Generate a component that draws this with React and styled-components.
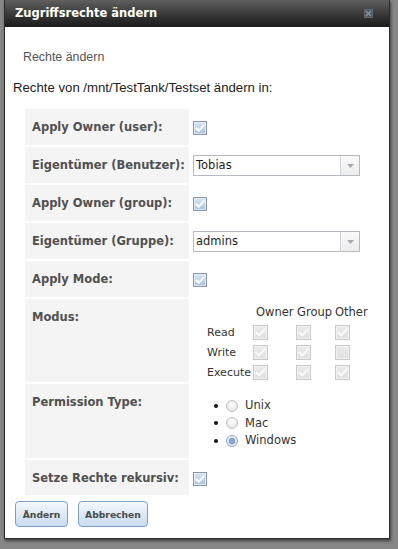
import React from 'react';
import styled, { createGlobalStyle } from 'styled-components';

const Global = createGlobalStyle`
  html, body { margin: 0; padding: 0; background: #878787; }
  body { font-family: "DejaVu Sans", sans-serif; }
  * { box-sizing: border-box; }
`;

const Screen = styled.div`
  width: 398px;
  height: 549px;
  overflow: hidden;
  background: #878787;
  padding-left: 4px;
`;

const Dialog = styled.div`
  width: 386px;
  border: 1px solid #2b2b2b;
  border-top: none;
  background: #fff;
  box-shadow: 1px 2px 3px rgba(0, 0, 0, 0.55);
`;

const TitleBar = styled.div`
  height: 27px;
  display: flex;
  align-items: center;
  justify-content: space-between;
  padding: 0 16px 1px 10px;
  background: linear-gradient(#5f5f5f, #303030 65%, #1b1b1b);
  color: #fff;
  font: bold 11.5px "DejaVu Sans", sans-serif;
`;

const Body = styled.div`
  padding: 22px 8px 11px;
`;

const Subtitle = styled.div`
  margin-left: 10px;
  font: 12.4px/16px "Liberation Sans", Arial, sans-serif;
  color: #555;
`;

const Intro = styled.div`
  margin-top: 15px;
  font: 13.2px/16px "Liberation Sans", Arial, sans-serif;
  color: #222;
`;

const Form = styled.div`
  margin: 13px 0 0 12px;
  display: flex;
  flex-direction: column;
  gap: 2px;
`;

const Row = styled.div`
  display: grid;
  grid-template-columns: 164px 1fr;
  column-gap: 4px;
  height: ${(p) => p.$h}px;
`;

const Label = styled.div`
  background: #f4f4f4;
  padding: 11px 7px 0;
  font: bold 11.5px/15px "DejaVu Sans", sans-serif;
  color: #505050;
  white-space: nowrap;
`;

const Value = styled.div`
  padding-top: ${(p) => p.$pt}px;
  padding-left: ${(p) => p.$pl || 0}px;
  font: 11.5px/15px "DejaVu Sans", sans-serif;
  color: #222;
`;

const SelectBox = styled.div`
  width: 167px;
  height: 21px;
  display: flex;
  border: 1px solid #b5bac1;
  background: #fff;
`;

const SelectText = styled.div`
  flex: 1;
  padding-left: 2px;
  font: 11.5px/19px "DejaVu Sans", sans-serif;
  color: #1e1e1e;
`;

const SelectArrow = styled.div`
  width: 19px;
  border-left: 1px solid #d3d6da;
  background: linear-gradient(#fafafa, #ececec);
  display: flex;
  align-items: center;
  justify-content: center;
`;

const ModeGrid = styled.div`
  display: grid;
  grid-template-columns: 46px 43px 39px auto;
  grid-auto-rows: 20px;
  align-items: center;
  font: 11.5px/15px "DejaVu Sans", sans-serif;
  color: #333;
`;

const HeadCell = styled.div`
  padding-left: ${(p) => p.$pl}px;
  white-space: nowrap;
`;

const ModeName = styled.span`
  font-size: 11px;
  white-space: nowrap;
`;

const RadioList = styled.ul`
  list-style: none;
  margin: 0;
  padding: 0 0 0 21px;
`;

const RadioItem = styled.li`
  display: flex;
  align-items: center;
  height: 17.5px;
  font: 11.5px/15px "DejaVu Sans", sans-serif;
  color: #333;
  &::before {
    content: "";
    width: 4px;
    height: 4px;
    border-radius: 50%;
    background: #111;
    margin-right: 8px;
  }
`;

const RadioText = styled.span`
  margin-left: 7px;
`;

const Buttons = styled.div`
  display: flex;
  gap: 10px;
  margin: 6px 0 0 2px;
`;

const Button = styled.button`
  height: 26px;
  width: ${(p) => p.$w}px;
  padding: 0;
  border: 1px solid #7b9fc3;
  border-radius: 4px;
  background: linear-gradient(#f4f8fd, #dbe8f6 55%, #c9ddf2);
  box-shadow: inset 0 1px 0 #fff;
  font: bold 9.2px "DejaVu Sans", sans-serif;
  color: #4a4a4a;
  cursor: pointer;
`;

function CheckBox({ checked = true, disabled = false, size = 14 }) {
  const id = disabled ? 'cbd' : 'cbe';
  return (
    <svg width={size} height={size} viewBox="0 0 14 14" style={{ display: 'block' }}>
      <defs>
        <linearGradient id="cbe" x1="0" y1="0" x2="0" y2="1">
          <stop offset="0" stopColor="#d9e7f5" />
          <stop offset="1" stopColor="#a3c2e0" />
        </linearGradient>
        <linearGradient id="cbd" x1="0" y1="0" x2="0" y2="1">
          <stop offset="0" stopColor="#ececec" />
          <stop offset="1" stopColor="#dedede" />
        </linearGradient>
      </defs>
      <rect x="0.5" y="0.5" width="13" height="13" fill={`url(#${id})`} stroke={disabled ? '#cacaca' : '#8898aa'} />
      <rect x="1.5" y="1.5" width="11" height="11" fill="none" stroke={disabled ? '#f4f4f4' : '#e9f1f9'} strokeWidth="0.8" />
      {checked && (
        <polyline
          points="3.3,7.2 5.8,9.8 10.8,4.2"
          fill="none"
          stroke={disabled ? '#f8f8f8' : '#ffffff'}
          strokeWidth="2"
          strokeLinecap="round"
          strokeLinejoin="round"
        />
      )}
    </svg>
  );
}

function Radio({ checked }) {
  return (
    <svg width="12" height="12" viewBox="0 0 12 12" style={{ display: 'block' }}>
      <defs>
        <radialGradient id="rg" cx="0.5" cy="0.4" r="0.6">
          <stop offset="0" stopColor="#ffffff" />
          <stop offset="1" stopColor="#e3e3e3" />
        </radialGradient>
      </defs>
      <circle cx="6" cy="6" r="5.5" fill="url(#rg)" stroke={checked ? '#8fa9c6' : '#c2c2c2'} />
      {checked && <circle cx="6" cy="6" r="3" fill="#86a9d3" stroke="#6f93bf" strokeWidth="0.6" />}
    </svg>
  );
}

function CloseIcon() {
  return (
    <svg width="9" height="9" viewBox="0 0 9 9" style={{ display: 'block' }}>
      <rect x="0.5" y="0.5" width="8" height="8" fill="#4f555c" stroke="#5f666e" />
      <path d="M2 2 L7 7 M7 2 L2 7" stroke="#8a949e" strokeWidth="1.4" />
    </svg>
  );
}

function ArrowDown() {
  return (
    <svg width="7" height="4" viewBox="0 0 7 4" style={{ display: 'block' }}>
      <polygon points="0,0 7,0 3.5,4" fill="#a4a8ae" />
    </svg>
  );
}

function Select({ value }) {
  return (
    <SelectBox>
      <SelectText>{value}</SelectText>
      <SelectArrow>
        <ArrowDown />
      </SelectArrow>
    </SelectBox>
  );
}

const modes = [
  ['Read', true, true, true],
  ['Write', true, true, false],
  ['Execute', true, true, true],
];

export default function App() {
  return (
    <>
      <Global />
      <Screen>
        <Dialog>
          <TitleBar>
            <span>Zugriffsrechte ändern</span>
            <CloseIcon />
          </TitleBar>
          <Body>
            <Subtitle>Rechte ändern</Subtitle>
            <Intro>Rechte von /mnt/TestTank/Testset ändern in:</Intro>
            <Form>
              <Row $h={36}>
                <Label>Apply Owner (user):</Label>
                <Value $pt={12}><CheckBox /></Value>
              </Row>
              <Row $h={36}>
                <Label>Eigentümer (Benutzer):</Label>
                <Value $pt={8}><Select value="Tobias" /></Value>
              </Row>
              <Row $h={36}>
                <Label>Apply Owner (group):</Label>
                <Value $pt={12}><CheckBox /></Value>
              </Row>
              <Row $h={36}>
                <Label>Eigentümer (Gruppe):</Label>
                <Value $pt={8}><Select value="admins" /></Value>
              </Row>
              <Row $h={36}>
                <Label>Apply Mode:</Label>
                <Value $pt={12}><CheckBox /></Value>
              </Row>
              <Row $h={83}>
                <Label>Modus:</Label>
                <Value $pt={3} $pl={14}>
                  <ModeGrid>
                    <span />
                    <HeadCell $pl={3}>Owner</HeadCell>
                    <HeadCell $pl={1}>Group</HeadCell>
                    <HeadCell $pl={0}>Other</HeadCell>
                    {modes.map(([name, o, g, x]) => (
                      <React.Fragment key={name}>
                        <ModeName>{name}</ModeName>
                        <CheckBox disabled checked={o} size={15} />
                        <CheckBox disabled checked={g} size={15} />
                        <CheckBox disabled checked={x} size={15} />
                      </React.Fragment>
                    ))}
                  </ModeGrid>
                </Value>
              </Row>
              <Row $h={74}>
                <Label>Permission Type:</Label>
                <Value $pt={13}>
                  <RadioList>
                    <RadioItem><Radio /><RadioText>Unix</RadioText></RadioItem>
                    <RadioItem><Radio /><RadioText>Mac</RadioText></RadioItem>
                    <RadioItem><Radio checked /><RadioText>Windows</RadioText></RadioItem>
                  </RadioList>
                </Value>
              </Row>
              <Row $h={35}>
                <Label>Setze Rechte rekursiv:</Label>
                <Value $pt={12}><CheckBox /></Value>
              </Row>
            </Form>
            <Buttons>
              <Button $w={53}>Ändern</Button>
              <Button $w={70}>Abbrechen</Button>
            </Buttons>
          </Body>
        </Dialog>
      </Screen>
    </>
  );
}
